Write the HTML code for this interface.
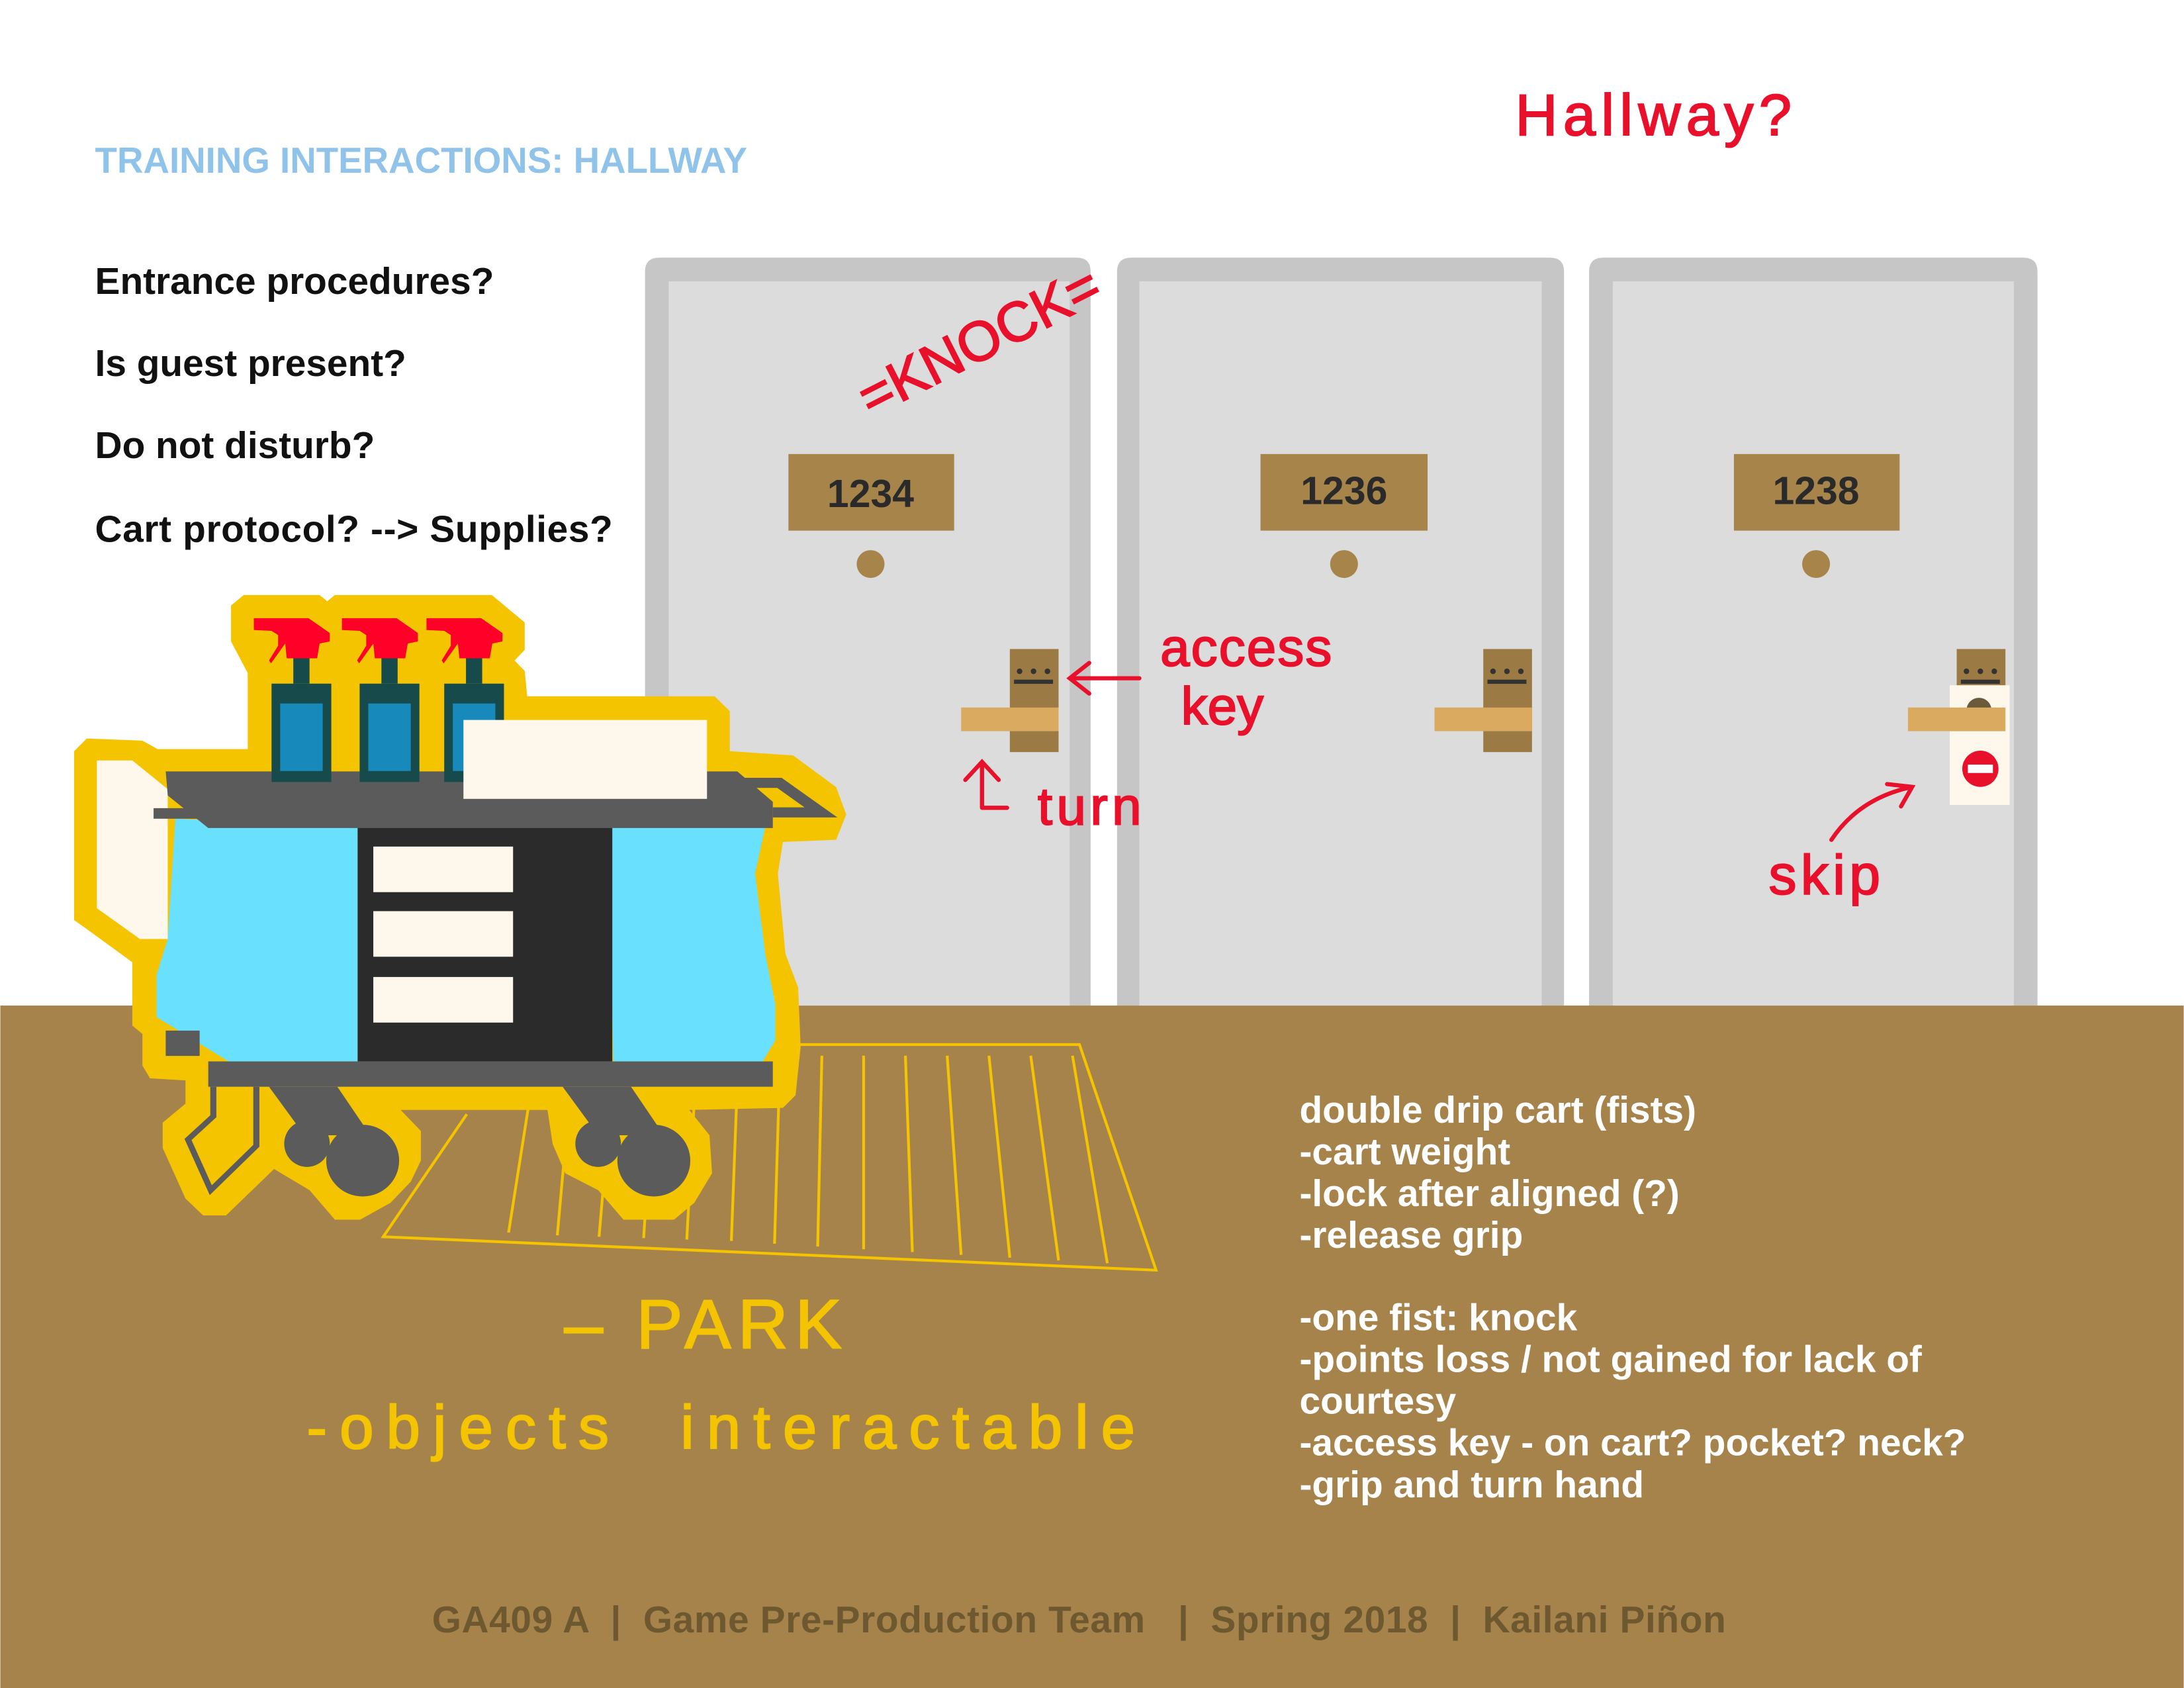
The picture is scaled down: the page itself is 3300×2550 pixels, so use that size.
<!DOCTYPE html>
<html><head><meta charset="utf-8"><style>html,body{margin:0;padding:0;background:#fff}svg{display:block}</style></head><body>
<svg width="3300" height="2550" viewBox="0 0 1568 1212" xmlns="http://www.w3.org/2000/svg" font-family="Liberation Sans, sans-serif">
<rect width="1568" height="1212" fill="#fff"/>
<rect y="722" width="1568" height="490" fill="#a6834a"/>
<text x="68" y="124" font-size="26" font-weight="bold" fill="#8fc3ea">TRAINING INTERACTIONS: HALLWAY</text>
<g font-size="27" fill="#111" font-weight="bold">
<text x="68" y="211">Entrance procedures?</text>
<text x="68" y="270">Is guest present?</text>
<text x="68" y="329">Do not disturb?</text>
<text x="68" y="389" letter-spacing="0.3">Cart protocol? --&gt; Supplies?</text>
</g>
<!-- doors -->
<g>
<path d="M463 722V195q0-10 10-10h300q10 0 10 10V722z" fill="#c6c6c6"/>
<rect x="480" y="202" width="288" height="520" fill="#dcdcdc"/>
<path d="M802 722V195q0-10 10-10h301q10 0 10 10V722z" fill="#c6c6c6"/>
<rect x="818" y="202" width="289" height="520" fill="#dcdcdc"/>
<path d="M1141 722V195q0-10 10-10h302q10 0 10 10V722z" fill="#c6c6c6"/>
<rect x="1158" y="202" width="288" height="520" fill="#dcdcdc"/>
</g>
<g fill="#a6844a">
<rect x="566" y="326" width="119" height="55"/>
<rect x="905" y="326" width="120" height="55"/>
<rect x="1245" y="326" width="119" height="55"/>
<circle cx="625" cy="405" r="10"/><circle cx="965" cy="405" r="10"/><circle cx="1304" cy="405" r="10"/>
</g>
<g font-size="28" font-weight="bold" fill="#2a2a2a" text-anchor="middle">
<text x="625" y="364">1234</text><text x="965" y="362">1236</text><text x="1304" y="362">1238</text>
</g>
<!-- locks -->
<g>
<rect x="725" y="466" width="35" height="74" fill="#9c7a44"/><rect x="690" y="508" width="70" height="17" fill="#d9aa60"/>
<rect x="1065" y="466" width="35" height="74" fill="#9c7a44"/><rect x="1030" y="508" width="70" height="17" fill="#d9aa60"/>
<rect x="1405" y="466" width="35" height="74" fill="#9c7a44"/>
<rect x="1400" y="492" width="43" height="86" fill="#fdf7ec"/>
<circle cx="1421" cy="510" r="9" fill="#6b5a3c"/>
<rect x="1370" y="508" width="70" height="17" fill="#d9aa60"/>
<circle cx="1422" cy="552" r="13" fill="#e8102a"/><rect x="1413" y="549" width="18" height="6" fill="#fff"/>
<g fill="#333"><circle cx="732" cy="482" r="2"/><circle cx="742" cy="482" r="2"/><circle cx="752" cy="482" r="2"/><rect x="728" y="488" width="28" height="3"/>
<circle cx="1072" cy="482" r="2"/><circle cx="1082" cy="482" r="2"/><circle cx="1092" cy="482" r="2"/><rect x="1068" y="488" width="28" height="3"/>
<circle cx="1412" cy="482" r="2"/><circle cx="1422" cy="482" r="2"/><circle cx="1432" cy="482" r="2"/><rect x="1408" y="488" width="28" height="3"/></g>
</g>
<!-- red annotations -->
<g fill="#e8102a" stroke="#e8102a" stroke-width="1">
<text x="1088" y="97" font-size="42" letter-spacing="4">Hallway?</text>
<text transform="translate(625,300) rotate(-27)" font-size="40">=KNOCK=</text>
<text x="833" y="478" font-size="38" letter-spacing="1">access</text>
<text x="848" y="520" font-size="38">key</text>
<text x="745" y="592" font-size="38" letter-spacing="3">turn</text>
<text x="1270" y="642" font-size="40" letter-spacing="3">skip</text>
</g>
<g fill="none" stroke="#e8102a" stroke-width="3" stroke-linecap="round">
<path d="M818 487H768M782 476l-14 11 14 11"/>
<path d="M705 580V548M693 560l12-13 12 13M705 580h18"/>
<path d="M1315 603q20-30 58-38M1355 563l18 2-8 14"/>
</g>
<!-- carpet sketch -->
<g fill="none" stroke="#f5c400" stroke-width="2">
<path d="M560 750H775L830 912L275 888L335 800"/>
<path d="M380 790L365 885M410 775L400 887M440 770L430 888M470 765L462 889M500 760L493 890M530 758L525 891M560 758L556 893M590 758L587 895M620 758L620 897M650 758L655 899M680 758L690 901M710 758L725 903M740 758L760 905M770 758L795 907"/>
</g>
<!-- cart -->
<g transform="translate(47.51,418.13) scale(0.36363,0.30306)">
<path d="M15 400L40 370L150 375L180 395L358 395L358 215L325 140L325 55L350 30L500 30L515 45L530 30L840 30L880 70L905 95L905 160L885 185L905 210L910 270L1280 270L1310 305L1310 400L1435 410L1520 485L1540 550L1520 610L1415 615L1405 690L1420 880L1445 960L1450 1100L1440 1215L1415 1245L1230 1250L1270 1310L1275 1400L1240 1470L1200 1510L1100 1510L1050 1440L985 1400L960 1330L950 1250L660 1250L700 1300L700 1370L680 1420L640 1470L580 1510L530 1510L480 1440L410 1390L315 1500L270 1500L235 1460L190 1340L190 1280L235 1235L235 1180L165 1175L150 1145L150 1070L130 1050L130 900L50 830L15 800Z" fill="#f5c400"/>
<polygon points="60,422 130,422 200,490 200,845 145,845 60,772" fill="#fdf7ec"/>
<polygon points="215,560 575,580 575,1135 320,1135 178,1030 178,930 200,845" fill="#6ae0ff"/>
<polygon points="1070,580 1380,580 1360,690 1380,880 1400,1000 1400,1085 1375,1135 1080,1135" fill="#6ae0ff"/>
<rect x="575" y="580" width="503" height="555" fill="#2b2b2b"/>
<g fill="#fdf7ec"><rect x="606" y="626" width="276" height="108"/><rect x="606" y="779" width="276" height="108"/><rect x="606" y="935" width="276" height="108"/></g>
<polygon points="196,448 1325,448 1395,520 1395,582 280,582 200,505" fill="#5b5b5b"/>
<rect x="172" y="535" width="110" height="25" fill="#5b5b5b"/>
<path d="M1310 475H1408L1490 545H1395" fill="none" stroke="#5b5b5b" stroke-width="24"/>
<rect x="280" y="1135" width="1115" height="60" fill="#5b5b5b"/>
<rect x="196" y="1062" width="67" height="60" fill="#5b5b5b"/>
<path d="M290 1195V1265L240 1320L285 1440L375 1335V1195" fill="none" stroke="#5b5b5b" stroke-width="12"/>
<g fill="#5b5b5b">
<polygon points="400,1195 535,1195 600,1310 470,1310"/><ellipse cx="475" cy="1330" rx="45" ry="55"/><ellipse cx="585" cy="1370" rx="72" ry="85"/>
<polygon points="980,1195 1115,1195 1180,1310 1050,1310"/><ellipse cx="1050" cy="1330" rx="45" ry="55"/><ellipse cx="1160" cy="1370" rx="72" ry="85"/>
</g>
<g id="b">
<rect x="405" y="240" width="118" height="233" fill="#174b4b"/>
<rect x="422" y="287" width="84" height="160" fill="#1789bb"/>
<rect x="448" y="180" width="32" height="60" fill="#174b4b"/>
<polygon points="370,85 478,85 520,120 520,140 500,145 495,180 435,180 432,145 404,192 400,185 418,150 418,125 405,115 370,113" fill="#ff0029"/>
</g>
<use href="#b" x="174"/><use href="#b" x="341"/>
<rect x="784" y="326" width="481" height="187" fill="#fdf7ec"/>
</g>
<g fill="#f5c400" stroke="#f5c400" stroke-width="1">
<text x="405" y="968" font-size="50" letter-spacing="5">– PARK</text>
<text x="220" y="1040" font-size="44" letter-spacing="9" xml:space="preserve">-objects  interactable</text>
</g>
<g font-size="27" fill="#fff" font-weight="bold">
<text x="933" y="806">double drip cart (fists)</text>
<text x="933" y="836">-cart weight</text>
<text x="933" y="866">-lock after aligned (?)</text>
<text x="933" y="896">-release grip</text>
<text x="933" y="955">-one fist: knock</text>
<text x="933" y="985">-points loss / not gained for lack of</text>
<text x="933" y="1015">courtesy</text>
<text x="933" y="1045">-access key - on cart? pocket? neck?</text>
<text x="933" y="1075">-grip and turn hand</text>
</g>
<text x="310" y="1172" font-size="27" font-weight="bold" fill="#6e5830" letter-spacing="0.3" xml:space="preserve">GA409 A  |  Game Pre-Production Team   |  Spring 2018  |  Kailani Piñon</text>
</svg>
</body></html>
